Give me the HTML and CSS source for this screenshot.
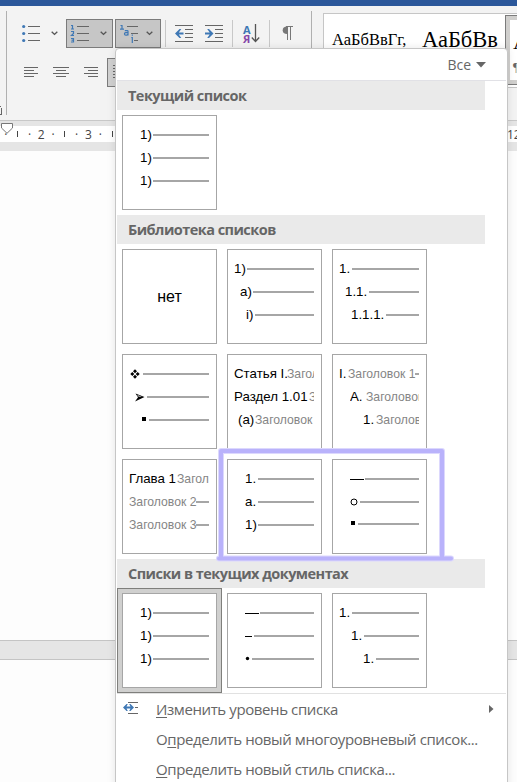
FILE: index.html
```html
<!DOCTYPE html>
<html lang="ru">
<head>
<meta charset="utf-8">
<title>Многоуровневый список</title>
<link rel="stylesheet" href="styles.css">
</head>
<body>
<div class="titlebar"></div>
<div class="ribbon">
  <div class="clipped"><svg width="3" height="10" viewBox="0 0 3 10"><path d="M0 1.500h1M1.500 3v7M0 9.500h2" stroke="#666" fill="none"/></svg></div>
  <div class="paragraph">
    <div class="tools">
      <div class="tool bullets">
        <svg width="19" height="19" viewBox="0 0 19 19"><g fill="#3f78b5"><circle cx="1.700" cy="2.500" r="1.600"/><circle cx="1.700" cy="9.500" r="1.600"/><circle cx="1.700" cy="16.500" r="1.600"/></g><path d="M6 2.500h12M6 9.500h12M6 16.500h12" stroke="#666"/></svg>
        <svg class="chev" width="7" height="5" viewBox="0 0 7 5"><path d="M.7.800 3.500 3.400 6.300.800" fill="none" stroke="#555" stroke-width="1.400"/></svg>
      </div>
      <div class="tool on numbers">
        <svg width="19" height="19" viewBox="0 0 19 19"><path d="M1 1.500h1.500V5M1 5h3M1 7.500h2.500v2L1.500 11.500H4M1 14.500h2.500v3.500H1M1.500 16.200h2" fill="none" stroke="#3f78b5" stroke-width="1.200"/><path d="M7 2.500h12M7 9.500h12M7 16.500h12" stroke="#666"/></svg>
        <svg class="chev" width="7" height="5" viewBox="0 0 7 5"><path d="M.7.800 3.500 3.400 6.300.800" fill="none" stroke="#555" stroke-width="1.400"/></svg>
      </div>
      <div class="tool on levels">
        <svg width="19" height="19" viewBox="0 0 19 19"><path d="M.5 1.500H2V5M0 5.200h4M4.800 6.600h2.500q.7 0 .7.700V11.500M8 8.700H5.700q-1.200 0-1.200 1.200t1.200 1.200h1.200L8 10.200M11.300 13.500h1V19M12.300 10.500v1.300" fill="none" stroke="#3f78b5" stroke-width="1.200"/><path d="M7 2.500h11M11 9.500h7M14 16.500h4" stroke="#666"/></svg>
        <svg class="chev" width="7" height="5" viewBox="0 0 7 5"><path d="M.7.800 3.500 3.400 6.300.800" fill="none" stroke="#555" stroke-width="1.400"/></svg>
      </div>
      <i class="sep s1"></i>
      <svg class="outdent" width="18" height="17" viewBox="0 0 18 17"><path d="M0 .5h18M10 4.500h8M10 8.500h8M10 12.500h8M0 16.500h18" stroke="#666"/><path d="M4.500 4 0 8.500 4.500 13h1.800L3.800 9.600H8.500V7.400H3.800L6.300 4z" fill="#3f78b5"/></svg>
      <svg class="indent" width="18" height="17" viewBox="0 0 18 17"><path d="M0 .5h18M10 4.500h8M10 8.500h8M10 12.500h8M0 16.500h18" stroke="#666"/><path d="M4 4 8.500 8.500 4 13H2.200L4.700 9.600H0V7.400H4.700L2.200 4z" fill="#3f78b5"/></svg>
      <i class="sep s2"></i>
      <div class="sort"><div class="letters"><b>А</b><b class="ya">Я</b></div><svg width="9" height="19" viewBox="0 0 9 19"><path d="M4.500 0v17M.8 13.500l3.700 4 3.700-4" fill="none" stroke="#555" stroke-width="1.300"/></svg></div>
      <i class="sep s3"></i>
      <svg class="pilcrow" width="11" height="15" viewBox="0 0 11 15"><path d="M5 .5a4 3.500 0 0 0 0 7.500z" fill="#777"/><path d="M4 .5h7M5.500.5V14M8.500.5V14" stroke="#777" fill="none"/></svg>
    </div>
    <div class="aligns">
      <svg width="14" height="11" viewBox="0 0 14 11"><path d="M0 .5h14M0 3.500h10M0 6.500h14M0 9.500h10" stroke="#666"/></svg>
      <svg width="16" height="11" viewBox="0 0 16 11"><path d="M0 .5h16M3 3.500h10M0 6.500h16M3 9.500h10" stroke="#666"/></svg>
      <svg width="14" height="11" viewBox="0 0 14 11"><path d="M0 .5h14M4 3.500h10M0 6.500h14M4 9.500h10" stroke="#666"/></svg>
      <div class="justify"><svg width="16" height="14" viewBox="0 0 16 14"><path d="M0 .5h16M0 3.500h16M0 6.500h16M0 9.500h16M0 12.500h16" stroke="#666"/></svg></div>
    </div>
  </div>
  <div class="styles">
    <div class="style one">АаБбВвГг,</div>
    <div class="style two">АаБбВв</div>
    <div class="style current"><span>А</span><small>¶</small></div>
  </div>
</div>
<div class="rulerbar">
  <div class="ruler">
    <div class="marks"><span>·</span><span class="tick"></span><span>·</span><span>2</span><span>·</span><span class="tick"></span><span>·</span><span>3</span><span>·</span><span class="tick"></span></div>
    <span class="far">12</span>
  </div>
  <svg class="marker" width="12" height="11" viewBox="0 0 12 11"><path d="M.5.500h11v4.500L6 10.300.500 5z" fill="#fff" stroke="#777"/></svg>
</div>
<div class="page first"></div>
<div class="pagegap"></div>
<div class="page last"></div>

<div class="menu">
  <div class="filter"><span>Все</span><svg width="10" height="6" viewBox="0 0 10 6"><path d="M0 0h10L5 5.500z" fill="#666"/></svg></div>
  <h2 class="h-current">Текущий список</h2>
  <div class="tiles">
    <div class="tile">
      <div class="row m17"><span class="w13">1)</span><hr></div>
      <div class="row m17"><span class="w13">1)</span><hr></div>
      <div class="row m17"><span class="w13">1)</span><hr></div>
    </div>
  </div>
  <h2 class="h-library">Библиотека списков</h2>
  <div class="tiles">
    <div class="tile none">нет</div>
    <div class="tile">
      <div class="row m6"><span class="w13">1)</span><hr></div>
      <div class="row m12"><span class="w13">a)</span><hr></div>
      <div class="row m18"><span class="w9">i)</span><hr></div>
    </div>
    <div class="tile">
      <div class="row m6"><span class="w13">1.</span><hr></div>
      <div class="row m12"><span class="w24">1.1.</span><hr></div>
      <div class="row m18"><span class="w35">1.1.1.</span><hr></div>
    </div>
    <div class="tile">
      <div class="row m7"><span class="w13"><svg width="10" height="10" viewBox="0 0 10 10"><path d="M5 .3 7 2.300 5 4.300 3 2.300zM5 5.700 7 7.700 5 9.700 3 7.700zM2.300 3 4.300 5 2.300 7 .3 5zM7.700 3 9.700 5 7.700 7 5.700 5z"/></svg></span><hr></div>
      <div class="row m12"><span class="w12"><svg width="10" height="9" viewBox="0 0 10 9"><path d="M.5.500 9.500 4 0 8.500 3 4.200z"/><path d="M2 1.700 7 3.800H3.600z" fill="#ccc"/></svg></span><hr></div>
      <div class="row m19"><span class="w7"><svg width="4" height="6" viewBox="0 0 4 6"><path d="M0 0h4v4H0z"/></svg></span><hr></div>
    </div>
    <div class="tile">
      <div class="row m6"><span class="w53">Статья I.</span><em>Заголовок 1</em></div>
      <div class="row m6"><span class="w75">Раздел 1.01</span><em>Заголовок 2</em></div>
      <div class="row m10"><span class="w17">(a)</span><em>Заголовок 3</em></div>
    </div>
    <div class="tile">
      <div class="row m6"><span class="w9">I.</span><em>Заголовок 1</em><hr></div>
      <div class="row m17"><span class="w16">A.</span><em>Заголовок 2</em></div>
      <div class="row m30"><span class="w13">1.</span><em>Заголовок 3</em></div>
    </div>
    <div class="tile">
      <div class="row m6"><span class="w48">Глава 1</span><em>Заголовок 1</em></div>
      <div class="row m6"><em>Заголовок 2</em><hr></div>
      <div class="row m6"><em>Заголовок 3</em><hr></div>
    </div>
    <div class="tile">
      <div class="row m17"><span class="w13">1.</span><hr></div>
      <div class="row m17"><span class="w13">a.</span><hr></div>
      <div class="row m17"><span class="w13">1)</span><hr></div>
    </div>
    <div class="tile">
      <div class="row m17"><span class="w15"><i class="dash long"></i></span><hr></div>
      <div class="row m17"><span class="w10"><svg width="8" height="8" viewBox="0 0 8 8"><circle cx="4" cy="4" r="3" fill="none" stroke="#000"/></svg></span><hr></div>
      <div class="row m18 raised"><span class="w7"><svg width="4" height="6" viewBox="0 0 4 6"><path d="M0 0h4v4H0z"/></svg></span><hr></div>
    </div>
  </div>
  <h2 class="h-docs">Списки в текущих документах</h2>
  <div class="tiles docs">
    <div class="tile selected">
      <div class="row m17"><span class="w13">1)</span><hr></div>
      <div class="row m17"><span class="w13">1)</span><hr></div>
      <div class="row m17"><span class="w13">1)</span><hr></div>
    </div>
    <div class="tile">
      <div class="row m17"><span class="w15"><i class="dash long"></i></span><hr></div>
      <div class="row m17"><span class="w9"><i class="dash"></i></span><hr></div>
      <div class="row m17"><span class="w7"><svg width="5" height="6" viewBox="0 0 5 6"><circle cx="2.500" cy="2.500" r="1.700"/></svg></span><hr></div>
    </div>
    <div class="tile">
      <div class="row m6"><span class="w13">1.</span><hr></div>
      <div class="row m18"><span class="w13">1.</span><hr></div>
      <div class="row m30"><span class="w13">1.</span><hr></div>
    </div>
  </div>
  <div class="commands">
    <div class="command">
      <span class="cmdicon"><svg width="16" height="12" viewBox="0 0 16 12"><path d="M5 .5h10M12 5.500h3M5 11.500h10" stroke="#666"/><path d="M0 5.500 3.500 2h1.300L3.500 4.500H7.500L6.200 2h1.300L11 5.500 7.500 9H6.200L7.500 6.500H3.500L4.800 9H3.500z" fill="#3f78b5"/></svg></span>
      <span class="c1"><u>И</u>зменить уровень списка</span>
      <svg class="sub" width="5" height="8" viewBox="0 0 5 8"><path d="M0 0v8l4.500-4z" fill="#666"/></svg>
    </div>
    <div class="command"><span class="cmdicon"></span><span class="c2">О<u>п</u>ределить новый многоуровневый список...</span></div>
    <div class="command"><span class="cmdicon"></span><span class="c3"><u>О</u>пределить новый стиль списка...</span></div>
  </div>
</div>
<svg class="highlight" width="240" height="116" viewBox="0 0 240 116"><g fill="none" stroke-linecap="round" stroke-linejoin="round"><path d="M226 111V4H5V110M3 111.500H235" stroke="#dcd8fd" stroke-width="6"/><path d="M226 111V4H5V110M3 111.500H235" stroke="#b9b2fb" stroke-width="4"/></g></svg>
</body>
</html>
```
FILE: styles.css
```css
* { box-sizing: border-box; }
body {
  margin: 0; width: 517px; height: 782px; overflow: hidden; position: relative;
  display: flex; flex-direction: column; background: #fff; color: #000;
  font-family: "Open Sans", "Noto Sans", sans-serif;
}
svg { display: block; flex: none; }
.titlebar { height: 6px; background: #2b579a; flex: none; }
.ribbon { height: 115px; flex: none; background: #f3f3f3; border-bottom: 1px solid #c8c8c8; display: flex; }
.clipped { width: 7px; height: 104px; margin-top: 5px; border-right: 1px solid #b0b0b0; display: flex; align-items: flex-end; }
.paragraph { width: 305px; margin-top: 5px; border-right: 1px solid #b0b0b0; height: 104px; }
.tools { display: flex; align-items: center; height: 29px; margin-top: 8px; }
.tool { display: flex; align-items: center; height: 29px; border: 1px solid transparent; flex: none; }
.tool.on { background: #c6c6c6; border-color: #7b7b7b; }
.bullets { width: 59px; padding-left: 14px; gap: 10px; }
.numbers { width: 47px; padding-left: 3px; gap: 11px; }
.levels { width: 46px; padding-left: 4px; gap: 7px; margin-left: 2px; }
.sep { width: 1px; height: 27px; background: #c8c8c8; flex: none; }
.s1 { margin-left: 4px; }
.outdent { margin-left: 9px; }
.indent { margin-left: 12px; }
.s2 { margin-left: 9px; }
.sort { display: flex; margin-left: 10px; align-items: center; width: 17px; }
.letters { width: 8px; display: flex; flex-direction: column; font-size: 11px; line-height: 9px; color: #3f78b5; }
.ya { color: #8748a8; }
.s3 { margin-left: 9px; }
.pilcrow { margin-left: 12px; }
.aligns { display: flex; align-items: center; margin-top: 10px; padding-left: 17px; height: 29px; }
.aligns > svg + svg { margin-left: 15px; }
.justify { width: 30px; height: 29px; margin-left: 9px; padding: 6px 5px; border: 1px solid #7b7b7b; background: #d0d0d0; }
.styles { margin: 7px 0 0 11px; width: 194px; height: 75px; border: 1px solid #c6c6c6; border-right: 0; background: #fff; display: flex; overflow: hidden; font-family: "Liberation Serif", serif; white-space: nowrap; }
.style { flex: none; }
.one { width: 90px; padding-left: 8px; font-size: 16.500px; line-height: 52px; }
.two { width: 91px; padding-left: 8px; font-size: 22.500px; line-height: 52px; }
.current { width: 40px; height: 70px; margin-top: 1px; border: 1px solid #7b7b7b; box-shadow: inset 0 0 0 4px #d0cfcd; padding: 13px 0 0 7px; font-size: 22px; display: flex; flex-direction: column; }
.current small { font-size: 12px; color: #666; margin-top: 5px; }
.rulerbar { height: 30px; flex: none; background: #e5e5e5; padding-top: 5px; position: relative; }
.ruler { height: 16px; background: #fff; display: flex; justify-content: space-between; overflow: hidden; font-size: 12px; line-height: 17px; color: #444; }
.marks { display: flex; align-items: center; }
.marks span { width: 11.800px; text-align: center; flex: none; }
.marks .tick { height: 6px; background: linear-gradient(#444, #444) center / 1px 6px no-repeat; }
.far { width: 10px; }
.marker { position: absolute; left: 1px; top: 2px; }
.page { background: #fdfdfd; flex: none; }
.first { height: 489px; }
.pagegap { height: 20px; flex: none; background: #e5e5e5; border: solid #c4c4c4; border-width: 1px 0; }
.last { height: 122px; }

.menu { position: absolute; left: 115px; top: 48px; width: 393px; height: 750px; background: #fff; border: 1px solid #c6c6c6; border-radius: 4px 4px 0 0; padding: 0 1px; box-shadow: 0 0 9px rgba(0, 0, 0, .1); }
.filter { height: 32px; border-bottom: 1px solid #e1e1e6; display: flex; justify-content: flex-end; align-items: center; gap: 5px; padding-right: 20px; font-size: 14px; color: #666; }
h2 { margin: 0; width: 368px; height: 29px; background: #eaeaea; padding-left: 11px; font-size: 14.500px; letter-spacing: -.54px; line-height: 29px; color: #666; white-space: nowrap; }
.tiles { display: grid; grid-template-columns: repeat(3, 95px); gap: 10px; padding: 5px; }
.tile { height: 95px; border: 1px solid #a6a6a6; background: #fff; padding: 8px 7px 0 0; font: 13.300px/22px "Liberation Sans", sans-serif; }
.tile.none { display: flex; align-items: center; justify-content: center; padding: 0; font-size: 16px; }
.tile.selected { box-shadow: 0 0 0 4px #d0d0cf, 0 0 0 5px #7f7f7c; }
.row { display: flex; align-items: center; height: 22px; margin-bottom: 1px; overflow: hidden; white-space: nowrap; }
.row > span { flex: none; }
.row em { font-style: normal; font-size: 12.200px; color: #858585; flex: none; }
.row hr { flex: 1; height: 2px; margin: 0; border: 0; background: #a6a6a6; }
.raised { margin-top: -1px; }
.dash { display: block; width: 7px; height: 1px; background: #000; }
.dash.long { width: 14px; }
.m6 { margin-left: 6px; } .m7 { margin-left: 7px; } .m10 { margin-left: 10px; }
.m12 { margin-left: 12px; } .m17 { margin-left: 17px; } .m18 { margin-left: 18px; }
.m19 { margin-left: 19px; } .m30 { margin-left: 30px; }
.w7 { width: 7px; } .w9 { width: 9px; } .w10 { width: 10px; } .w12 { width: 12px; }
.w13 { width: 13px; } .w15 { width: 15px; } .w16 { width: 16px; } .w17 { width: 17px; }
.w24 { width: 24px; } .w35 { width: 35px; } .w48 { width: 48px; } .w53 { width: 53px; } .w75 { width: 75px; }
.commands { border-top: 1px solid #e1e1e1; }
.command { display: flex; align-items: center; height: 30px; font-size: 15px; letter-spacing: -.4px; color: #666; white-space: nowrap; }
.cmdicon { width: 39px; padding-left: 6px; flex: none; }
.cmdicon svg { margin-top: -3px; }
.sub { margin-left: auto; margin-right: 12px; }
u { text-underline-offset: 2px; }
.highlight { position: absolute; left: 216px; top: 447px; }
```
